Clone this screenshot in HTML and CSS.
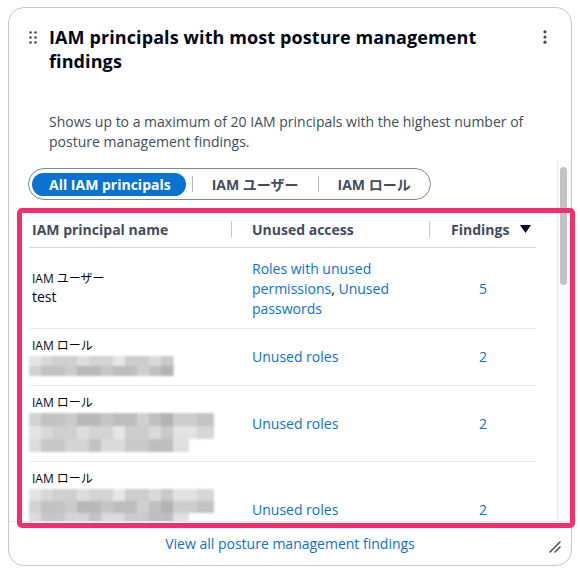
FILE: index.html
```html
<!DOCTYPE html>
<html lang="ja">
<head>
    <meta charset="UTF-8">
    <meta name="viewport" content="width=device-width, initial-scale=1.0">
    <title>IAM principals with most posture management findings</title>
    <link rel="stylesheet" href="styles.css">
</head>
<body>
    <div class="widget">
        <div class="widget-header">
            <span class="drag-handle">
                <svg width="8" height="13" viewBox="0 0 8 13">
                    <circle cx="1.5" cy="1.5" r="1.3"/>
                    <circle cx="6.5" cy="1.5" r="1.3"/>
                    <circle cx="1.5" cy="6.5" r="1.3"/>
                    <circle cx="6.5" cy="6.5" r="1.3"/>
                    <circle cx="1.5" cy="11.5" r="1.3"/>
                    <circle cx="6.5" cy="11.5" r="1.3"/>
                </svg>
            </span>
            <h2 class="widget-title">IAM principals with most posture management findings</h2>
            <span class="menu-btn">
                <svg width="4" height="14" viewBox="0 0 4 14">
                    <circle cx="2" cy="1.8" r="1.6"/>
                    <circle cx="2" cy="7" r="1.6"/>
                    <circle cx="2" cy="12.2" r="1.6"/>
                </svg>
            </span>
        </div>

        <p class="widget-desc">Shows up to a maximum of 20 IAM principals with the highest number of posture management findings.</p>

        <div class="widget-body">
            <div class="scroll-content">
                <div class="segmented">
                    <span class="seg-btn active">All IAM principals</span>
                    <span class="seg-sep"></span>
                    <span class="seg-btn">IAM ユーザー</span>
                    <span class="seg-sep"></span>
                    <span class="seg-btn">IAM ロール</span>
                </div>

                <div class="table">
                    <div class="tr thead">
                        <div class="th c1">IAM principal name</div>
                        <div class="th c2"><span class="col-sep"></span>Unused access</div>
                        <div class="th c3"><span class="col-sep"></span>Findings
                            <svg class="sort-icon" width="11" height="8" viewBox="0 0 11 8"><path d="M0 0h11L5.5 8z"/></svg>
                        </div>
                    </div>

                    <div class="tr row-tall">
                        <div class="td c1">
                            <span class="p-type">IAM ユーザー</span>
                            <span class="p-name">test</span>
                        </div>
                        <div class="td c2">
                            <p><a href="#">Roles with unused permissions</a>, <a href="#">Unused passwords</a></p>
                        </div>
                        <div class="td c3"><a href="#">5</a></div>
                    </div>

                    <div class="tr">
                        <div class="td c1">
                            <span class="p-type">IAM ロール</span>
                            <div class="redact short">
                                <span class="ln-a"></span>
                                <span class="ln-b"></span>
                            </div>
                        </div>
                        <div class="td c2"><a href="#">Unused roles</a></div>
                        <div class="td c3"><a href="#">2</a></div>
                    </div>

                    <div class="tr">
                        <div class="td c1">
                            <span class="p-type">IAM ロール</span>
                            <div class="redact three">
                                <span class="ln-b"></span>
                                <span class="ln-a"></span>
                                <span class="ln-c"></span>
                            </div>
                        </div>
                        <div class="td c2"><a href="#">Unused roles</a></div>
                        <div class="td c3"><a href="#">2</a></div>
                    </div>

                    <div class="tr">
                        <div class="td c1">
                            <span class="p-type">IAM ロール</span>
                            <div class="redact">
                                <span class="ln-a"></span>
                                <span class="ln-b"></span>
                                <span class="ln-c"></span>
                                <span class="ln-a"></span>
                                <span class="ln-b"></span>
                            </div>
                        </div>
                        <div class="td c2"><a href="#">Unused roles</a></div>
                        <div class="td c3"><a href="#">2</a></div>
                    </div>
                </div>
            </div>

            <div class="scrollbar"><div class="scroll-thumb"></div></div>
        </div>

        <div class="widget-footer">
            <a href="#">View all posture management findings</a>
            <svg class="resize-handle" width="12" height="12" viewBox="0 0 12 12">
                <path d="M1 11L11 1M6 11l5-5"/>
            </svg>
        </div>
    </div>

    <!-- annotation frame -->
    <div class="highlight"></div>
</body>
</html>
```

FILE: styles.css
```css
:root {
    --text: #000716;
    --text-muted: #414d5c;
    --link: #0972d3;
    --border: #c6c6cd;
    --divider: #e9ebed;
    --mark: #f52d6b;
}

* {
    box-sizing: border-box;
    margin: 0;
    padding: 0;
}

body {
    font-family: "Open Sans", "Noto Sans CJK JP", sans-serif;
    color: var(--text);
    background: #fff;
    position: relative;
    min-height: 575px;
}

a {
    color: var(--link);
    text-decoration: none;
}

.widget {
    margin: 7px 0 0 8px;
    width: 564px;
    height: 559px;
    border: 1px solid var(--border);
    border-radius: 16px;
    background: #fff;
    display: flex;
    flex-direction: column;
    overflow: hidden;
}

/* header */
.widget-header {
    display: flex;
    align-items: flex-start;
    padding: 17px 18px 0 20px;
}

.drag-handle {
    width: 8px;
    height: 24px;
    margin-right: 12px;
    display: flex;
    align-items: center;
    fill: var(--text-muted);
}

.widget-title {
    font-size: 18px;
    line-height: 24px;
    font-weight: 700;
    letter-spacing: 0.1px;
    width: 470px;
}

.menu-btn {
    margin-left: auto;
    width: 16px;
    height: 24px;
    display: flex;
    align-items: center;
    justify-content: center;
    fill: var(--text-muted);
}

.widget-desc {
    margin: 39px 0 8px 40px;
    width: 480px;
    font-size: 14px;
    line-height: 20px;
    color: var(--text-muted);
}

/* body */
.widget-body {
    flex: 1;
    position: relative;
    overflow: hidden;
}

.scroll-content {
    padding: 8px 35px 0 19px;
}

.segmented {
    display: inline-flex;
    align-items: center;
    height: 32px;
    padding: 0 0 0 3px;
    border: 1px solid #7d8998;
    border-radius: 16px;
}

.seg-btn {
    font-size: 14px;
    font-weight: 700;
    line-height: 23px;
    color: var(--text-muted);
    padding: 0 19px;
    white-space: nowrap;
}

.seg-btn.active {
    background: var(--link);
    color: #fff;
    border-radius: 12px;
    padding: 0 15px 0 17px;
    margin-right: 6px;
}

.seg-sep {
    width: 1px;
    height: 16px;
    background: #b4b4bb;
}

/* table */
.table {
    margin: 11px 0 0 1px;
    width: 507px;
}

.tr {
    display: grid;
    grid-template-columns: 202px 198px 107px;
    border-bottom: 1px solid var(--divider);
}

.thead {
    height: 37px;
    border-bottom-color: #d1d5db;
}

.th {
    display: flex;
    align-items: center;
    font-size: 14px;
    font-weight: 700;
    color: var(--text-muted);
    white-space: nowrap;
}

.th.c1 { padding-left: 3px; }

.col-sep {
    width: 1px;
    height: 16px;
    background: #c6c6cd;
    margin-right: 20px;
}

.th.c3 .col-sep { margin-right: 21px; }

.sort-icon {
    margin-left: 11px;
    fill: var(--text);
}

.td {
    display: flex;
    flex-direction: column;
    justify-content: center;
    padding: 9px 0;
    font-size: 14px;
    line-height: 20px;
}

.row-tall .td { padding: 11px 0 9px; }

.td.c1 { padding-left: 3px; }
.td.c2 { padding-left: 21px; padding-right: 8px; }
.td.c3 { padding-left: 50px; }

.p-type {
    font-size: 12px;
    line-height: 16px;
    color: var(--text);
}

.p-name {
    font-size: 14px;
    line-height: 20px;
}

/* masked names */
.redact {
    display: flex;
    flex-direction: column;
    width: 185px;
    margin: 2px 0 0 -3px;
    filter: blur(1.3px);
}

.redact span {
    display: block;
    height: 12px;
}

.redact.short { width: 145px; }
.redact.short span { height: 10px; }
.redact.three span { height: 13px; }

.ln-a {
    background: linear-gradient(90deg,
        #e4e4e4 0 12px, #d8d8d8 12px 24px, #cfcfcf 24px 48px, #dedede 48px 60px,
        #d3d3d3 60px 84px, #e6e6e6 84px 96px, #cdcdcd 96px 120px, #dadada 120px 132px,
        #c9c9c9 132px 144px, #e2e2e2 144px 168px, #d6d6d6 168px 185px);
}

.ln-b {
    background: linear-gradient(90deg,
        #d2d2d2 0 12px, #c2c2c2 12px 36px, #cbcbcb 36px 48px, #b9b9b9 48px 72px,
        #c6c6c6 72px 84px, #bdbdbd 84px 108px, #d0d0d0 108px 120px, #c0c0c0 120px 132px,
        #b3b3b3 132px 144px, #cccccc 144px 168px, #c4c4c4 168px 185px);
}

.ln-c {
    background: linear-gradient(90deg,
        #dcdcdc 0 12px, #c7c7c7 12px 36px, #d5d5d5 36px 60px, #c3c3c3 60px 72px,
        #dadada 72px 96px, #cacaca 96px 120px, #bebebe 120px 144px, #e0e0e0 144px 160px,
        #fff 160px 185px);
}

/* fake scrollbar */
.scrollbar {
    position: absolute;
    top: 0;
    right: 0;
    bottom: 0;
    width: 14px;
    border-left: 1px solid var(--divider);
    background: #fcfcfc;
    padding: 7px 0 0 2px;
}

.scroll-thumb {
    width: 7px;
    height: 118px;
    border-radius: 4px;
    background: #c2c2c2;
}

/* footer */
.widget-footer {
    height: 44px;
    border-top: 1px solid var(--divider);
    display: flex;
    align-items: center;
    justify-content: center;
    position: relative;
    font-size: 14px;
}

.resize-handle {
    position: absolute;
    right: 10px;
    bottom: 12px;
    fill: none;
    stroke: #414d5c;
    stroke-width: 1.5;
    stroke-linecap: round;
}

.highlight {
    position: absolute;
    left: 17px;
    top: 208px;
    width: 558px;
    height: 320px;
    border: 5px solid var(--mark);
    border-radius: 5px;
    pointer-events: none;
}
```
